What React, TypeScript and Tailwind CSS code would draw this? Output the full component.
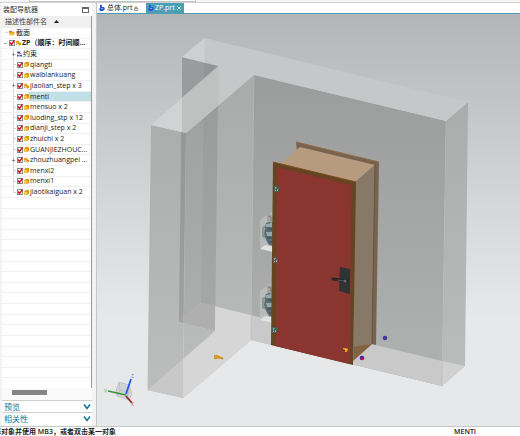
import React, { useState } from "react";

type Kind = "folder" | "assembly" | "constraint" | "part";
type Item = { name: string; kind: Kind; level: number; expand?: "+" | "-"; checked?: boolean };

const items: Item[] = [
  { name: "截面", kind: "folder", level: 0 },
  { name: "ZP（顺序：时间顺...", kind: "assembly", level: 0, expand: "-", checked: true },
  { name: "约束", kind: "constraint", level: 1, expand: "+" },
  { name: "qiangti", kind: "part", level: 1, checked: true },
  { name: "waibiankuang", kind: "part", level: 1, checked: true },
  { name: "jiaolian_step x 3", kind: "assembly", level: 1, expand: "+", checked: true },
  { name: "menti", kind: "part", level: 1, checked: true },
  { name: "mensuo x 2", kind: "part", level: 1, checked: true },
  { name: "luoding_stp x 12", kind: "part", level: 1, checked: true },
  { name: "dianji_step x 2", kind: "part", level: 1, checked: true },
  { name: "zhuichi x 2", kind: "part", level: 1, checked: true },
  { name: "GUANJIEZHOUC...", kind: "part", level: 1, checked: true },
  { name: "zhouzhuangpei ...", kind: "assembly", level: 1, expand: "+", checked: true },
  { name: "menxi2", kind: "part", level: 1, checked: true },
  { name: "menxi1", kind: "part", level: 1, checked: true },
  { name: "jiaotikaiguan x 2", kind: "part", level: 1, checked: true },
];

const emptyRows = Array.from({ length: 18 }, (_, i) => i);

function KindIcon({ kind }: { kind: Kind }) {
  if (kind === "folder")
    return (
      <svg viewBox="0 0 7 6" className="h-[6px] w-[6px] shrink-0" aria-hidden="true">
        <path d="M0 .5h3l.7 1H6V3H0z" fill="#c98b12" />
        <path d="M0 5.7 1.4 2.4H7L5.8 5.7z" fill="#f0b93b" />
      </svg>
    );
  if (kind === "constraint")
    return (
      <svg viewBox="0 0 6 6" className="h-[6px] w-[5px] shrink-0" aria-hidden="true">
        <path d="M0 0h4v2H0z" fill="#5361b5" />
        <path d="M1 2h4v1H1z" fill="#b94b60" />
        <path d="M0 4h2v2H0zM3 4h3v2H3z" fill="#4054a8" />
      </svg>
    );
  if (kind === "assembly")
    return (
      <svg viewBox="0 0 6 6" className="h-[6px] w-[5px] shrink-0" aria-hidden="true">
        <path d="M0 1 2 0l2 1v2L2 4 0 3z" fill="#e5a51c" />
        <path d="m2 3 2-1 2 1v2L4 6 2 5z" fill="#cf8d0c" />
        <path d="M2 3 4 4v2L2 5z" fill="#f5cf58" />
        <path d="M0 4h1v1H0z" fill="#946814" />
      </svg>
    );
  return (
    <svg viewBox="0 0 6 6" className="h-[5px] w-[5px] shrink-0" aria-hidden="true">
      <path d="M0 2 2 0h4v4L4 6H0z" fill="#d99810" />
      <path d="M0 2h4v4H0z" fill="#f2be3d" />
      <path d="M1 3h2v1H1z" fill="#fff0b0" />
    </svg>
  );
}

function TreeRow({ item, selected, onSelect, index }: { item: Item; selected: boolean; onSelect: () => void; index: number }) {
  const id = "part-" + index;
  const last = index === items.length - 1;
  return (
    <li
      onClick={onSelect}
      className={
        "relative flex min-h-0 items-center gap-px border-t border-[#f0f0f0] " +
        (item.level ? "pl-[11px]" : "pl-[3px]")
      }
    >
      {selected && <span className="absolute inset-y-0 right-0 left-[27px] bg-[#c0e0e6]" />}
      {item.level === 1 && (
        <span className={"absolute top-0 left-[11px] w-px bg-[#d9d9d9] " + (last ? "h-1/2" : "h-full")} />
      )}
      {item.expand ? (
        <button
          type="button"
          aria-label={"Toggle " + item.name}
          className="relative -ml-[2px] w-[5px] shrink-0 text-center text-[7px] leading-none text-[#555]"
        >
          {item.expand === "-" ? "−" : "+"}
        </button>
      ) : (
        <span className="h-px w-[3px] shrink-0 bg-[#d4d4d4]" />
      )}
      {item.checked !== undefined && (
        <span className="relative h-[6px] w-[6px] shrink-0">
          <input
            id={id}
            type="checkbox"
            defaultChecked
            className="peer block h-[6px] w-[6px] appearance-none border border-[#8a8a8a] bg-white"
          />
          <svg viewBox="0 0 6 6" className="pointer-events-none absolute inset-0 hidden h-[6px] w-[6px] peer-checked:block" aria-hidden="true">
            <path d="m1 2.5 1.5 2L5.5.5" fill="none" stroke="#d3151f" strokeWidth="1.4" />
          </svg>
        </span>
      )}
      <KindIcon kind={item.kind} />
      <label
        htmlFor={item.checked ? id : undefined}
        className={"relative leading-[10px] whitespace-nowrap " + (index === 1 ? "font-bold" : "")}
      >
        {item.name}
      </label>
    </li>
  );
}

function Section({ title }: { title: string }) {
  return (
    <button type="button" className="flex h-[12px] w-full items-center justify-between border-t border-[#cfcfcf] bg-white pr-px pl-[2px] text-[8px] leading-[11px] text-[#14779a]">
      {title}
      <svg viewBox="0 0 8 6" className="h-[6px] w-[8px]" aria-hidden="true">
        <path d="m1 .5 3 4 3-4" fill="none" stroke="#14779a" strokeWidth="1.6" />
      </svg>
    </button>
  );
}

function Navigator() {
  const [selected, setSelected] = useState(6);
  return (
    <aside className="flex w-[90px] shrink-0 flex-col bg-white pb-[2px]">
      <header className="flex h-[13px] items-center justify-between pt-px pr-[3px] pl-px text-[#333]">
        <h1 className="text-[7px]">装配导航器</h1>
        <button type="button" aria-label="float" className="h-[6px] w-[7px] border border-t-2 border-[#666]" />
      </header>
      <div className="flex h-[11px] items-center gap-[7px] border-r border-[#999] bg-[#f0f0f0] pl-[3px] text-[7px] leading-[10px] text-[#444]">
        <span>描述性部件名</span>
        <svg viewBox="0 0 5 3" className="h-[3px] w-[5px]" aria-hidden="true">
          <path d="M0 3 2.5 0 5 3z" fill="#222" />
        </svg>
      </div>
      <ul className="grid h-[361px] auto-rows-fr border-r border-[#999] text-[7px]">
        {items.map((item, i) => (
          <TreeRow key={item.name} item={item} index={i} selected={i === selected} onSelect={() => setSelected(i)} />
        ))}
        {emptyRows.map((n) => (
          <li key={n} className="border-t border-[#f0f0f0]" />
        ))}
      </ul>
      <div className="grow bg-[#fafafa] px-[10px] pt-[2px]">
        <div className="h-[5px] w-[35px] bg-[#858585]" />
      </div>
      <Section title="预览" />
      <Section title="相关性" />
    </aside>
  );
}

function TabIcon() {
  return (
    <svg viewBox="0 0 6 6" className="h-[6px] w-[6px]" aria-hidden="true">
      <path d="M1 0h2v2h2l1 2-2 2H1L0 4l1-1z" fill="#2859d8" />
      <path d="M2 3h2v1H2z" fill="#83a7ff" />
    </svg>
  );
}

function Hinge({ x, y }: { x: number; y: number }) {
  return (
    <g transform={`translate(${x} ${y})`}>
      <path d="M1 0h5v6H1z" fill="#565b58" />
      <path d="M2 1h1v2H2zM4 3h1v2H4z" fill="#8fa09c" />
      <path d="M2 4h1v1H2z" fill="#b0b6b4" />
      <path d="M3 1h1v1H3z" fill="#31a261" />
    </g>
  );
}

function Motor({ y }: { y: number }) {
  return (
    <g transform={`translate(259 ${y})`}>
      <path d="M1 9 14 0v40L1 37z" fill="#c0c1c1" opacity=".7" />
      <path d="m1 38 5-4 8 1v6z" fill="#e0e1e1" />
      <path d="m8 4 3-1 3 2v7l-6-1z" fill="#a4a3a1" />
      <path d="m9 5 3 1v4" fill="none" stroke="#7b7b79" />
      <path d="M7 12 10 11l4 1v23l-4-1-3-5-2-6 1-7z" fill="#5c6c72" />
      <path d="m7 13 6-1v4H7zM7 21h6v4H8z" fill="#94a9ae" />
      <path d="M4 16v10h2M4 16h3" fill="none" stroke="#617177" />
      <path d="M9 18h4M8 27h5M10 31h3" stroke="#3a4a50" />
      <path d="M3 16h2v1H3zM3 25h2v1H3z" fill="#45cc45" />
    </g>
  );
}

function Viewport() {
  return (
    <svg viewBox="97 14 423 412" className="block h-auto w-full" role="img" aria-label="ZP">
      <defs>
        <linearGradient id="sky" gradientUnits="userSpaceOnUse" x1="0" y1="14" x2="0" y2="426">
          <stop offset="0" stopColor="#b4b5b7" />
          <stop offset=".5" stopColor="#d8d9da" />
          <stop offset=".74" stopColor="#e6e8ea" />
          <stop offset="1" stopColor="#e6e8ea" />
        </linearGradient>
        <linearGradient id="back" gradientUnits="userSpaceOnUse" x1="0" y1="75" x2="0" y2="386">
          <stop offset="0" stopColor="#9b9c9c" />
          <stop offset="1" stopColor="#b0b1b1" />
        </linearGradient>
        <linearGradient id="side" gradientUnits="userSpaceOnUse" x1="0" y1="75" x2="0" y2="386">
          <stop offset="0" stopColor="#a9aaaa" />
          <stop offset="1" stopColor="#bbbdbd" />
        </linearGradient>
      </defs>
      <rect x="97" y="14" width="423" height="412" fill="url(#sky)" />

      <path d="M182 57 218.500 66 182 98z" fill="#9a9b9c" />
      <path d="M204 63 218.500 66 204 79z" fill="#939495" />
      <path d="M186 133 254 75 251 340 183 398z" fill="url(#side)" />
      <path d="M254 75 446 121 442 386 251 340z" fill="url(#back)" />
      <path d="M446 121 468 102 465 366 442 386z" fill="url(#side)" />
      <path d="M151 125 186 133 183 398 147.500 390z" fill="url(#side)" />

      <path d="M201 303 251 315 251 340 183 398V359L215 331 179 322z" fill="#d6d6d6" />
      <path d="M183 359V398L147.500 390z" fill="#c8c8c8" />
      <path d="M251 315 442 361V386L251 340z" fill="#c9c9c9" />
      <path d="M442 361 465 366 442 386z" fill="#d1d1d1" />
      <path d="M179 322 201 303 215 306V331z" fill="#bababa" />
      <path d="M182 98 218.500 66 215 331 179 322z" fill="#000" opacity=".06" />
      <path d="M204 79 218.500 66 215 331V306L201 303z" fill="#000" opacity=".03" />
      <path d="M181 132 186 133 183 323 179 322z" fill="#000" opacity=".08" />

      <path d="M204.500 38 468 102 446 121 254 75 186 133 151 125 218.500 66 182 57z" fill="#c6c7c8" />
      <path d="M204.500 38V62.500L182 57z" fill="#cecfd0" />
      <path d="M151 125 182 98V132z" fill="#d1d2d3" />
      <path d="M182 98 218.500 66V105L186 133 182 132z" fill="#bfc0c0" />
      <path d="M254 75 251 340M446 121 442 386" stroke="#b8b9b9" strokeWidth=".7" opacity=".7" />

      <Motor y={211} />
      <Motor y={282} />

      <path d="M296 142 379 162 376 345 372 344 300 180z" fill="#786351" />
      <path d="M296 142 379 162" stroke="#936c43" />
      <path d="M300 147 375 165 356 182 280 164z" fill="#b79b7e" />
      <path d="M355 182 375 165 372 344 353 361z" fill="#877867" />
      <path d="M354 347 372 344 354 360z" fill="#82633f" />
      <path d="M375 165 372 344" stroke="#68523c" />
      <path d="M273 162 356 182 353 365 271 345z" fill="#654421" />
      <path d="M273 162 356 182" stroke="#7e501f" />
      <path d="M277 167 351 185 350 364 275.500 346z" fill="#8a3530" />
      <Hinge x={273} y={186} />
      <Hinge x={272} y={257} />
      <Hinge x={271} y={327} />

      <path d="m340 267 10 2v25l-11-3z" fill="#303234" />
      <path d="m333 279 14 2" stroke="#26282a" strokeWidth="3" strokeLinecap="round" />
      <path d="m337 280 8 1" stroke="#505457" />
      <circle cx="345" cy="281" r="1.500" fill="#62676a" />

      <circle cx="385" cy="338" r="2.300" fill="#42389e" />
      <circle cx="362" cy="358" r="2.300" fill="#2b20d0" />
      <circle cx="362" cy="358.500" r="1.500" fill="#d11028" />
      <path d="M343 348h3l2 1-1 3h-2v-2l-2-1z" fill="#e2a012" />
      <path d="M345 349h1v1h-1z" fill="#f7dd3c" />
      <path d="m214 356 2-1 2 1 5 2v1l-5-1-3 1-1-1 1-1z" fill="#e0a01c" stroke="#c58712" strokeWidth=".7" />

      <path d="m119 382 10 3 3 9-3 6-12-4-1-5z" fill="#d2d3d4" stroke="#b9bbbc" strokeWidth=".7" />
      <path d="m119 382 1 8 9 3M129 385l-1 8-1 6M120 390l-3 6" fill="none" stroke="#b5b7b8" strokeWidth=".6" />
      <path d="m126 395-18-4" stroke="#339a3b" strokeWidth="1.500" />
      <path d="m126 394 5-15" stroke="#225bea" strokeWidth="1.800" />
      <path d="m126 396 6 7" stroke="#962b2b" strokeWidth="1.800" />
      <g fontFamily="Open Sans, sans-serif" fontSize="5">
        <text x="104" y="393" fill="#50af59">Y</text>
        <text x="131" y="378" fill="#507be9">Z</text>
        <text x="131" y="406" fill="#d56464">X</text>
      </g>
    </svg>
  );
}

export default function App() {
  return (
    <div className="bg-white font-['Open_Sans','Noto_Sans_CJK_SC',sans-serif] text-[#222]">
      <div className="flex h-[3px] gap-[2px] border-b border-[#d0d0d0] bg-[#f5f5f5] pl-[29px]">
        <div className="w-[167px] border-x border-b border-[#c4c4c4] bg-white" />
      </div>
      <main className="flex bg-[#f3f3f3] pl-[2px]">
        <Navigator />
        <section className="ml-[4px] min-w-0 grow border-l border-[#c5c8ca]">
          <nav className="flex h-[11px] items-stretch border-b border-[#4b9eb4] bg-white text-[7px] leading-[10px]">
            <button type="button" className="flex w-[49px] items-center gap-[2px] pl-[2px]">
              <TabIcon />
              <span>总体.prt</span>
              <svg viewBox="0 0 4 5" className="h-[5px] w-[4px]" aria-hidden="true">
                <path d="M1 2V1h2v1M.5 2.500h3v2h-3z" fill="none" stroke="#666" strokeWidth=".7" />
              </svg>
            </button>
            <button type="button" className="flex w-[38px] items-center gap-px bg-[#4a9fb5] pl-[2px] text-white">
              <TabIcon />
              <span>ZP.prt</span>
              <svg viewBox="0 0 4 4" className="ml-px h-[4px] w-[4px]" aria-hidden="true">
                <path d="m.5.5 3 3m0-3-3 3" stroke="white" />
              </svg>
            </button>
          </nav>
          <Viewport />
        </section>
      </main>
      <footer className="flex h-[10px] items-center justify-between border-t border-[#c5c8ca] bg-white pr-[44px] text-[7px] leading-[9px] font-semibold">
        <span className="-ml-[6px] whitespace-nowrap">择对象并使用 MB3，或者双击某一对象</span>
        <span>MENTI</span>
      </footer>
    </div>
  );
}
